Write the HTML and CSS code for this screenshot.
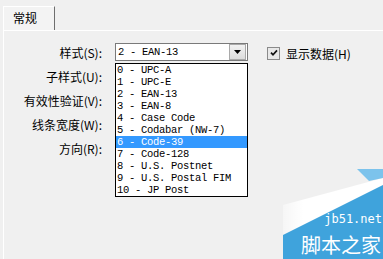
FILE: index.html
```html
<!DOCTYPE html>
<html lang="zh-CN">
<head>
    <meta charset="UTF-8">
    <title>常规</title>
    <link rel="stylesheet" href="styles.css">
</head>
<body>
<div class="window">
    <div class="tabs">
        <div class="tab">常规</div>
    </div>
    <div class="panel">
        <div class="row">
            <span class="lbl">样式(S):</span>
            <div class="combo">
                <span class="combo-text">2 - EAN-13</span>
                <span class="combo-btn">
                    <svg width="7" height="4" viewBox="0 0 7 4"><path d="M0 0H7L3.5 4Z" fill="#000"/></svg>
                </span>
                <ul class="list">
                    <li>0 - UPC-A</li>
                    <li>1 - UPC-E</li>
                    <li>2 - EAN-13</li>
                    <li>3 - EAN-8</li>
                    <li>4 - Case Code</li>
                    <li>5 - Codabar (NW-7)</li>
                    <li class="selected">6 - Code-39</li>
                    <li>7 - Code-128</li>
                    <li>8 - U.S. Postnet</li>
                    <li>9 - U.S. Postal FIM</li>
                    <li>10 - JP Post</li>
                </ul>
            </div>
            <label class="check">
                <span class="box">
                    <svg width="10" height="10" viewBox="0 0 10 10"><path d="M2 4.6L4 6.8L8 2.4" fill="none" stroke="#111" stroke-width="1.7"/></svg>
                </span>
                显示数据(H)
            </label>
        </div>
        <div class="row"><span class="lbl">子样式(U):</span></div>
        <div class="row"><span class="lbl">有效性验证(V):</span></div>
        <div class="row"><span class="lbl">线条宽度(W):</span></div>
        <div class="row"><span class="lbl">方向(R):</span></div>
    </div>

    <div class="mark">
        <svg class="mark-bg" width="100" height="90" viewBox="0 0 100 90">
            <defs>
                <linearGradient id="fade" x1="0" y1="0" x2="1" y2="0">
                    <stop offset="0" stop-color="#fff" stop-opacity="0.4"/>
                    <stop offset="0.2" stop-color="#fff" stop-opacity="1"/>
                </linearGradient>
            </defs>
            <path d="M0 36L100 9V16L0 66Z" fill="url(#fade)"/>
            <path d="M74 0H100V9L86 12Z" fill="#7cc3ec"/>
            <path d="M0 66L100 16V90H0Z" fill="#3fa3dc"/>
        </svg>
        <div class="mark-url">jb51.net</div>
        <div class="mark-name">脚本之家</div>
    </div>
</div>
</body>
</html>
```

FILE: styles.css
```css
body {
    margin: 0;
    background-color: #f0f0f0;
    font-family: "Noto Sans CJK SC", "Liberation Sans", sans-serif;
    font-size: 12px;
    color: #000;
}
.window {
    position: relative;
    width: 383px;
    height: 259px;
    overflow: hidden;
}
.tabs {
    display: flex;
    padding: 6px 0 0 3px;
}
.tab {
    width: 41px;
    height: 23px;
    padding-left: 9px;
    line-height: 21px;
    border-top: 1px solid #fff;
    border-left: 1px solid #fff;
    border-right: 1px solid #6e6e6e;
    background-color: #f3f3f3;
}
.panel {
    margin-left: 3px;
    height: 228px;
    border-top: 1px solid #fff;
    border-left: 1px solid #fff;
    padding-top: 12px;
    display: flex;
    flex-direction: column;
    gap: 6px;
}
.row {
    display: flex;
    align-items: center;
    height: 18px;
}
.lbl {
    width: 98px;
    text-align: right;
    white-space: nowrap;
}
.combo {
    position: relative;
    margin-left: 13px;
    width: 131px;
    height: 16px;
    border: 1px solid #7a7a7a;
    background-color: #fff;
    display: flex;
    align-items: center;
}
.combo-text, .list li {
    font-family: "Liberation Mono", "DejaVu Sans Mono", monospace;
    font-size: 10.5px;
    letter-spacing: -0.3px;
    white-space: nowrap;
}
.combo-text {
    flex: 1;
    padding-left: 2px;
}
.combo-btn {
    width: 15px;
    height: 14px;
    margin-right: 1px;
    border: 1px solid #a9a9a9;
    background: linear-gradient(#f2f2f2, #dcdcdc);
    display: flex;
    align-items: center;
    justify-content: center;
}
.list {
    position: absolute;
    top: 19px;
    left: -1px;
    width: 131px;
    margin: 0;
    padding: 0;
    list-style: none;
    border: 1px solid #000;
    background-color: #fff;
}
.list li {
    height: 12px;
    line-height: 12px;
    padding-left: 1px;
}
.list li.selected {
    background-color: #3399ff;
    color: #fff;
}
.check {
    display: flex;
    align-items: center;
    gap: 6px;
    margin-left: 19px;
    margin-top: 2px;
    white-space: nowrap;
}
.box {
    width: 11px;
    height: 11px;
    border: 1px solid #8a8a8a;
    background-color: #e8e8e8;
    display: flex;
    align-items: center;
    justify-content: center;
}
.mark {
    position: absolute;
    right: 0;
    bottom: 0;
    width: 100px;
    height: 90px;
    color: #fff;
}
.mark-bg {
    display: block;
}
.mark-url {
    position: absolute;
    right: 1px;
    top: 44px;
    font-family: "DejaVu Sans Mono", monospace;
    font-size: 12px;
    line-height: 13px;
}
.mark-name {
    position: absolute;
    right: 2px;
    top: 65px;
    font-size: 20px;
    line-height: 22px;
    letter-spacing: 0;
}
```
